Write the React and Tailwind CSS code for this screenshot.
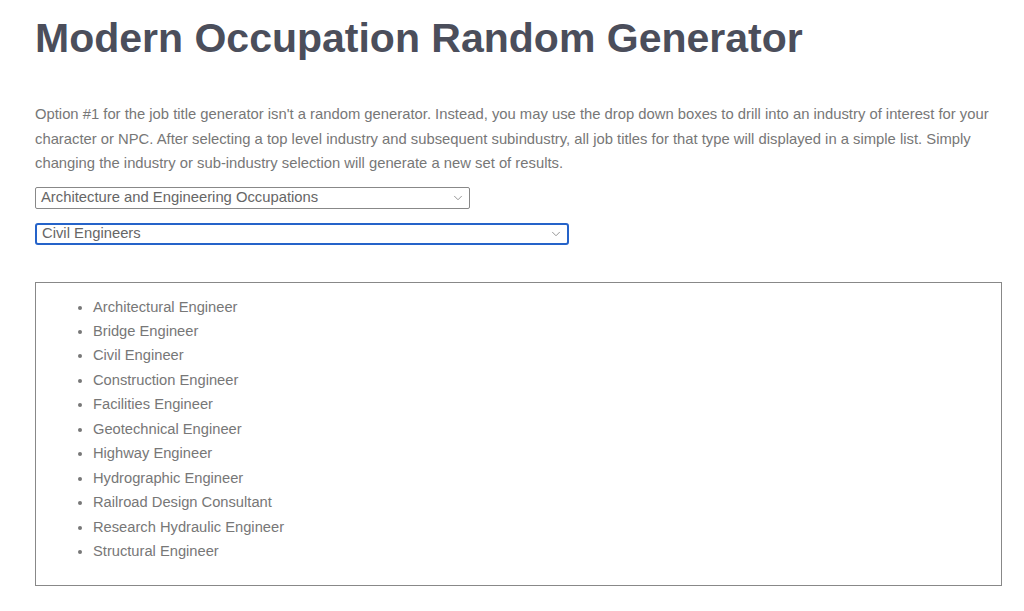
import { ChevronDown } from 'lucide-react'

const TITLES = [
  'Architectural Engineer',
  'Bridge Engineer',
  'Civil Engineer',
  'Construction Engineer',
  'Facilities Engineer',
  'Geotechnical Engineer',
  'Highway Engineer',
  'Hydrographic Engineer',
  'Railroad Design Consultant',
  'Research Hydraulic Engineer',
  'Structural Engineer',
]

function FakeSelect({ label, width, focused }) {
  return (
    <div
      className={
        'flex items-center justify-between h-[22px] pl-[5px] pr-[4px] text-[14.8px] text-[#666] bg-white ' +
        width +
        (focused
          ? ' border-2 border-[#2563c9] rounded-[3px]'
          : ' border border-[#888] rounded-[2px]')
      }
    >
      <span className="leading-none">{label}</span>
      <ChevronDown size={14} strokeWidth={1.5} className="text-[#888]" />
    </div>
  )
}

export default function App() {
  return (
    <div className="bg-white min-h-[611px] px-[35px] pt-[14px] font-['Liberation_Sans',Arial,sans-serif]">
      <h1 className="text-[41px] font-bold leading-[48px] text-[#4b4e5b]">
        Modern Occupation Random Generator
      </h1>

      <p className="mt-[40px] text-[14.8px] leading-[24.5px] text-[#777]">
        Option #1 for the job title generator isn't a random generator. Instead, you may use the drop down boxes to drill into an industry of interest for your character or NPC. After selecting a top level industry and subsequent subindustry, all job titles for that type will displayed in a simple list. Simply changing the industry or sub-industry selection will generate a new set of results.
      </p>

      <div className="mt-[11px] flex flex-col gap-[14px]">
        <FakeSelect label="Architecture and Engineering Occupations" width="w-[435px]" />
        <FakeSelect label="Civil Engineers" width="w-[534px]" focused />
      </div>

      <div className="mt-[37px] w-[967px] h-[304px] border border-[#888] pt-[12px]">
        <ul className="list-disc pl-[57px] text-[14.7px] leading-[24.45px] text-[#777]">
          {TITLES.map(t => (
            <li key={t}>{t}</li>
          ))}
        </ul>
      </div>
    </div>
  )
}
